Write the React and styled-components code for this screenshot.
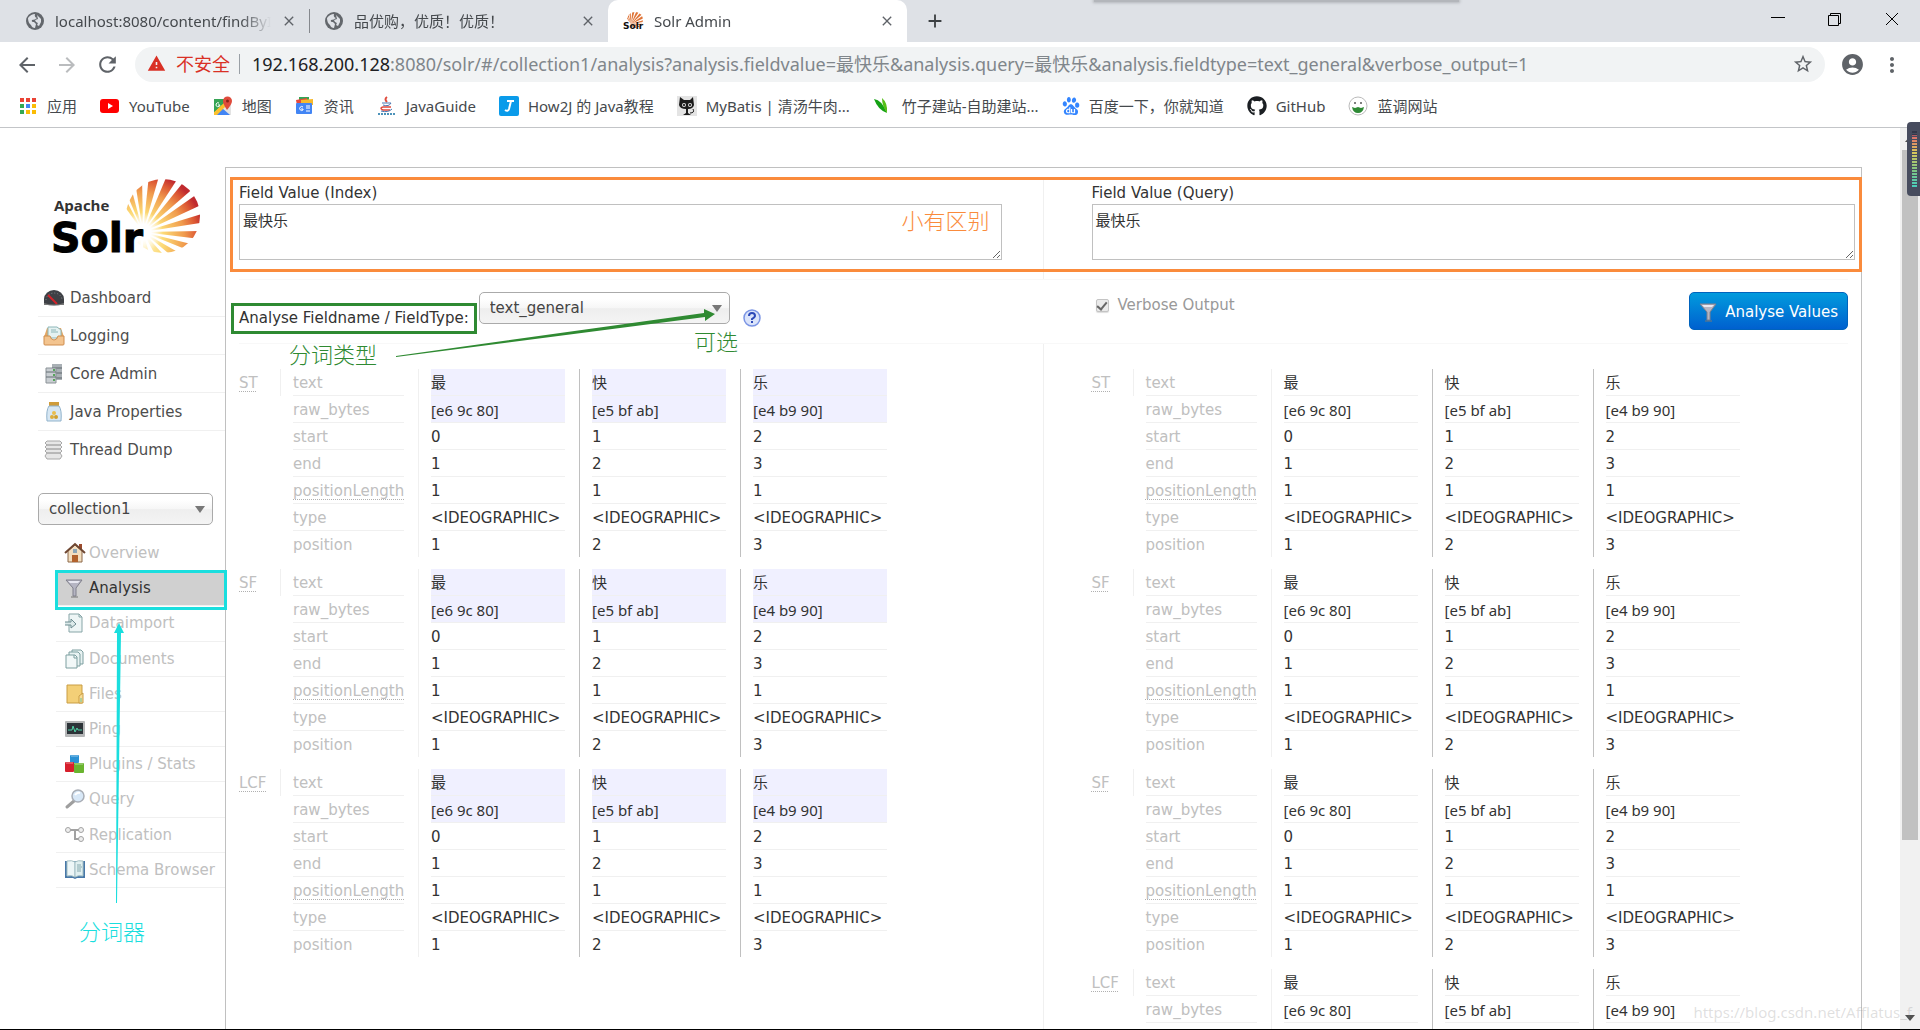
import { FaGithub } from "react-icons/fa";
import {
  MdAccountCircle,
  MdAdd,
  MdArrowBack,
  MdArrowForward,
  MdClose,
  MdMoreVert,
  MdRefresh,
  MdStarBorder,
  MdWarning,
} from "react-icons/md";
import { SiBaidu } from "react-icons/si";
import styled, { createGlobalStyle } from "styled-components";

const GlobalStyle = createGlobalStyle`
  * {
    box-sizing: border-box;
  }

  body {
    margin: 0;
    background: #fff;
    color: #333;
    font-family: "DejaVu Sans", "Noto Sans CJK SC", sans-serif;
    font-size: 15px;
    line-height: 20px;
  }

  ul {
    margin: 0;
    padding: 0;
    list-style: none;
  }

  button {
    padding: 0;
    border: 0;
    background: none;
    color: inherit;
    font: inherit;
  }

  a {
    color: inherit;
    text-decoration: none;
  }

  svg {
    display: block;
    flex: none;
    overflow: visible;
  }
`;

const ORANGE = "#fa8b3c";
const GREEN = "#2f8a32";
const CYAN = "#1adede";

/* ---------- browser window ---------- */

const Window = styled.div`
  position: relative;
  display: flex;
  flex-direction: column;
  height: 100vh;
  overflow: hidden;
  border-bottom: 1px solid #000;
`;

const Chrome = styled.header`
  flex: none;
  font-family: "Noto Sans", "Noto Sans CJK SC", sans-serif;
  border-bottom: 1px solid #c3c5c8;
`;

const TabStrip = styled.div`
  position: relative;
  display: flex;
  align-items: stretch;
  height: 42px;
  padding-left: 10px;
  background: #dee1e6;
`;

const TopShadow = styled.div`
  position: absolute;
  top: 0;
  left: 57%;
  width: 19%;
  height: 2px;
  background: #b3b6bb;
  box-shadow: 0 0 3px 1px #b3b6bb;
`;

const Tab = styled.div`
  display: flex;
  align-items: center;
  gap: 10px;
  width: 299px;
  padding: 0 12px 0 15px;
  background: ${(p) => (p.$active ? "#fff" : "transparent")};
  border-radius: 10px 10px 0 0;
  color: #45494d;
`;

const TabTitle = styled.span`
  flex: 1;
  min-width: 0;
  overflow: hidden;
  line-height: 28px;
  white-space: nowrap;
  mask-image: linear-gradient(90deg, #000 86%, transparent);
`;

const TabDivider = styled.span`
  align-self: center;
  width: 1px;
  height: 24px;
  margin-right: -1px;
  background: #85888d;
`;

const IconButton = styled.button`
  display: flex;
  align-items: center;
  justify-content: center;
  width: ${(p) => p.$width || 16}px;
  color: ${(p) => p.$color || "#5f6368"};
`;

const WindowButtons = styled.div`
  display: flex;
  margin-left: auto;
`;

const Toolbar = styled.div`
  display: flex;
  align-items: center;
  height: 45px;
  padding: 0 8px 0 7px;
`;

const AddressBar = styled.div`
  display: flex;
  flex: 1;
  align-items: center;
  height: 35px;
  margin: 0 7px;
  padding: 0 14px 2px 12px;
  border-radius: 18px;
  background: #f1f3f4;
  color: #80868b;
  font-size: 18px;
`;

const Insecure = styled.span`
  display: flex;
  align-items: center;
  gap: 10px;
  padding-right: 9px;
  border-right: 1px solid #9aa0a6;
  color: #d93025;
`;

const Url = styled.div`
  flex: 1;
  padding-left: 12px;
  overflow: hidden;
  line-height: 32px;
  white-space: nowrap;

  b {
    color: #202124;
    font-weight: 400;
  }
`;

const Bookmarks = styled.nav`
  display: flex;
  align-items: center;
  gap: 23px;
  height: 40px;
  padding: 0 18px 2px;
  color: #45494d;
`;

const Bookmark = styled.a`
  display: flex;
  align-items: center;
  gap: 9px;
  white-space: nowrap;
`;

const Viewport = styled.div`
  display: flex;
  flex: 1;
  min-height: 0;
`;

const Scrollbar = styled.div`
  display: flex;
  flex: none;
  flex-direction: column;
  align-items: center;
  justify-content: space-between;
  width: 20px;
  padding: 8px 3px 8px 1px;
  border-left: 1px solid #f1f1f1;
  background: #f1f1f1;
`;

const Thumb = styled.div`
  width: 16px;
  height: 78%;
  margin-bottom: auto;
  margin-top: 8px;
  background: #c1c1c1;
`;

const Meter = styled.div`
  position: absolute;
  top: 122px;
  right: 0;
  width: 13px;
  height: 74px;
  padding: 8px 3px 8px 5px;
  border-radius: 4px 0 0 4px;
  background: #474c5e;
`;

const MeterScale = styled.div`
  height: 100%;
  background:
    repeating-linear-gradient(#474c5e 0 1px, transparent 1px 3px),
    linear-gradient(#33384a 0 8%, #e0696c 10%, #d9c65a 38%, #7dc584 70%, #45cfc0);
`;

const Watermark = styled.div`
  position: absolute;
  right: 8px;
  bottom: 7px;
  color: rgba(130, 130, 130, 0.25);
  font-family: "Noto Sans", sans-serif;
  font-size: 15px;
`;

/* ---------- page ---------- */

const Page = styled.div`
  display: flex;
  flex: 1;
  min-width: 0;
  padding: 39px 38px 0;
  overflow: hidden;
`;

const Sidebar = styled.aside`
  flex: none;
  width: 187px;
`;

const LogoLink = styled.a`
  display: block;
  margin: 11px 0 25px 15px;
`;

const MainMenu = styled.ul`
  li + li {
    border-top: 1px solid #f0f0f0;
  }
`;

const MenuLink = styled.a`
  display: flex;
  align-items: center;
  gap: 6px;
  height: 37px;
  padding-left: 6px;
  color: #4d4d4d;
`;

const SelectBox = styled.div`
  position: relative;
  width: ${(p) => p.$width}px;
  height: 32px;

  svg {
    position: absolute;
    top: 13px;
    right: 8px;
    pointer-events: none;
  }
`;

const Select = styled.select`
  appearance: none;
  width: 100%;
  height: 100%;
  padding: 0 24px 0 10px;
  border: 1px solid #aaa;
  border-radius: 5px;
  background: linear-gradient(#fff 20%, #f6f6f6 50%, #eee 52%, #f4f4f4);
  color: #444;
  font: inherit;
`;

const CoreArea = styled.div`
  margin-top: 25px;
`;

const CoreMenu = styled.ul`
  position: relative;
  display: grid;
  grid-template-rows: repeat(10, 1fr);
  height: 352px;
  margin: 11px 0 0 18px;

  li {
    display: flex;
    border-bottom: 1px solid #f0f0f0;
  }

  li:first-child,
  li:last-child {
    border-bottom-color: transparent;
  }
`;

const CoreLink = styled.a`
  display: flex;
  flex: 1;
  align-items: center;
  gap: 4px;
  padding-left: 9px;
  background: ${(p) => (p.$active ? "#d0d0d0" : "transparent")};
  color: ${(p) => (p.$active ? "#333" : "#c0c0c0")};
  white-space: nowrap;
`;

const Content = styled.main`
  flex: 1;
  min-width: 0;
  padding-top: 10px;
  border: 1px solid #c0c0c0;
  border-bottom: 0;
`;

const Halves = styled.div`
  position: relative;
  display: grid;
  grid-template-columns: 1fr 1fr;
`;

const Half = styled.div`
  padding: ${(p) => (p.$right ? "0 6px 0 48px" : "0 41px 0 13px")};
  border-right: ${(p) => (p.$right ? "0" : "1px solid #f0f0f0")};
`;

const FieldHalf = styled(Half)`
  padding-top: 5px;
  padding-bottom: 19px;
`;

const FieldBox = styled.div`
  position: relative;
  margin-top: 1px;
`;

const TextArea = styled.textarea`
  display: block;
  width: 100%;
  height: 56px;
  padding: 6px 3px;
  border: 1px solid #c0c0c0;
  color: #333;
  font: inherit;
`;

const Options = styled.div`
  display: grid;
  grid-template-columns: 1fr 1fr;
  height: 65px;
  margin: 0 13px;
  padding-top: 12px;
  border-top: 1px solid #f8f8f8;
  border-bottom: 1px solid #f8f8f8;
`;

const TypePicker = styled.div`
  position: relative;
  display: flex;
  align-items: flex-start;
`;

const TypeLabel = styled.label`
  position: relative;
  margin: 11px 10px 0 0;
  line-height: 31px;
  white-space: nowrap;
`;

const HelpButton = styled.button`
  margin: 17px 0 0 13px;
`;

const Submit = styled.div`
  display: flex;
  align-items: flex-start;
  justify-content: space-between;
  padding-left: 52px;
`;

const VerboseLabel = styled.label`
  display: flex;
  align-items: center;
  gap: 9px;
  padding-top: 3px;
  color: #999;
`;

const CheckBox = styled.input`
  appearance: none;
  width: 13px;
  height: 13px;
  margin: 0;
  border: 1px solid #c4c4c4;
  border-radius: 2px;
  background: #eaeaea;
  box-shadow: 0 1px 1px #ddd;

  &:checked::before {
    content: "";
    display: block;
    width: 4px;
    height: 8px;
    margin: 0 auto;
    border: solid #666;
    border-width: 0 2px 2px 0;
    transform: rotate(40deg);
  }
`;

const AnalyseButton = styled.button`
  display: flex;
  align-items: center;
  gap: 6px;
  height: 38px;
  padding: 1px 9px 0;
  border: 1px solid #0063bd;
  border-radius: 5px;
  background: linear-gradient(#019bdd, #0060cf);
  color: #fff;
  white-space: nowrap;
`;

const ResultHalf = styled(Half)`
  padding-top: 25px;
`;

const StageTable = styled.table`
  width: 662px;
  margin-bottom: 12px;
  border-spacing: 0;
  table-layout: fixed;
`;

const StageCell = styled.th`
  width: 41px;
  padding: 0;
  color: #c0c0c0;
  font-weight: 400;
  text-align: left;
`;

const LabelCell = styled.th`
  width: 138px;
  padding: 0 14px 0 12px;
  border-left: 1px solid ${(p) => (p.$first ? "#f0f0f0" : "transparent")};
  color: #c0c0c0;
  font-weight: 400;
  text-align: left;
`;

const TokenCell = styled.td`
  width: 161px;
  padding: 0 14px 0 12px;
  border-left: 1px solid ${(p) => (p.$first ? "#f0f0f0" : "#c0c0c0")};
`;

const Value = styled.div`
  height: ${(p) => (p.$last ? 26 : 27)}px;
  padding-top: 4px;
  border-bottom: ${(p) => (p.$last ? "0" : "1px solid #f0f0f0")};
  background: ${(p) => (p.$match ? "#f0f0ff" : "transparent")};
  font-family: ${(p) => (p.$bytes ? '"Noto Sans", sans-serif' : "inherit")};
  white-space: nowrap;
`;

const Abbr = styled.abbr`
  text-decoration: underline dotted #b0b0b0 1px;
  text-underline-offset: 3px;
  text-decoration-skip-ink: none;
`;

/* ---------- hand drawn notes ---------- */

const Frame = styled.div`
  position: absolute;
  inset: ${(p) => p.$inset};
  border: 3px solid ${(p) => p.$color};
  pointer-events: none;
`;

const Note = styled.span`
  position: absolute;
  top: ${(p) => p.$top}px;
  left: ${(p) => p.$left};
  right: ${(p) => p.$right};
  color: ${(p) => p.$color};
  font-family: "Noto Sans CJK SC", sans-serif;
  font-size: 22px;
  font-weight: 300;
  line-height: 28px;
  white-space: nowrap;
  pointer-events: none;
`;

const Arrow = styled.svg`
  position: absolute;
  top: ${(p) => p.$top}px;
  left: ${(p) => p.$left}px;
  pointer-events: none;
`;

/* ---------- drawings ---------- */

const RAYS = [
  [-122, 4], [-109, 4], [-95, 4], [-79, 5], [-62, 5], [-46, 5], [-30, 5],
  [-13, 4], [3, 4], [18, 4], [35, 5], [55, 7], [82, 8], [110, 8],
];

function Sun({ x, y, far }) {
  const point = (deg) => {
    const rad = (deg * Math.PI) / 180;
    return `${x + Math.cos(rad) * far},${y + Math.sin(rad) * far}`;
  };

  return RAYS.map(([deg, half]) => (
    <polygon key={deg} points={`${x},${y} ${point(deg - half)} ${point(deg + half)}`} />
  ));
}

function SolrLogo() {
  return (
    <svg width="150" height="76" viewBox="0 0 150 76" role="img" aria-label="Apache Solr">
      <defs>
        <radialGradient id="sun" gradientUnits="userSpaceOnUse" cx="84" cy="61" r="68">
          <stop offset="0.1" stopColor="#fff6cf" />
          <stop offset="0.4" stopColor="#fcd974" />
          <stop offset="0.7" stopColor="#f09b4d" />
          <stop offset="0.88" stopColor="#dd5a34" />
          <stop offset="1" stopColor="#c02a2e" />
        </radialGradient>
        <radialGradient id="core" gradientUnits="userSpaceOnUse" cx="90" cy="54" r="20">
          <stop offset="0.4" stopColor="#fff" />
          <stop offset="1" stopColor="#fff" stopOpacity="0" />
        </radialGradient>
        <clipPath id="disc">
          <circle cx="110" cy="38" r="37" />
        </clipPath>
      </defs>
      <g clipPath="url(#disc)" fill="url(#sun)">
        <Sun x={90} y={54} far={90} />
      </g>
      <circle cx="90" cy="54" r="20" fill="url(#core)" />
      <text x="1" y="33" fontSize="15" fontWeight="700" fontFamily="Open Sans, sans-serif" fill="#333">
        Apache
      </text>
      <text x="-2" y="74" fontSize="41" fontWeight="700" fontFamily="DejaVu Sans, sans-serif" fill="#000" stroke="#000">
        Solr
      </text>
    </svg>
  );
}

const DRAWINGS = {
  globe: (
    <>
      <circle cx="10" cy="10" r="9" fill="#63676c" />
      <path d="M3 7Q6 3 10 3Q9 6 12 7Q10 9 7 9Q6 11 9 11L11 13L10 17Q7 17 6 14Q3 12 3 7Z" fill="#dee1e6" />
      <path d="M12 4L16 8V11L14 15L12 14Q14 12 11 11L10 9L13 8Z" fill="#dee1e6" />
    </>
  ),
  dashboard: (
    <>
      <path d="M0 16V11A10 9 0 0 1 20 11V16Q10 19 0 16Z" fill="#3e4045" />
      <path d="M2 12A8 7 0 0 1 18 12" fill="none" stroke="#85888c" strokeDasharray="1 2" />
      <path d="M4 7L13 16" stroke="#d2232a" strokeWidth="2" />
      <path d="M0 15Q10 18 20 15V17H0Z" fill="#777" />
    </>
  ),
  logging: (
    <>
      <path d="M3 2H17L20 11H0Z" fill="#e3a765" />
      <path d="M4 1H13L17 4V12H4Z" fill="#e5f2f2" stroke="#8db6b8" />
      <path d="M7 4H12M7 6H14" stroke="#8db6b8" />
      <path d="M0 10H6Q7 14 10 14T14 10H20V18Q20 19 19 19H1Q0 19 0 18Z" fill="#f3c48f" stroke="#cf8d4d" />
    </>
  ),
  core: (
    <>
      <path d="M8 0H18V16H8Z" fill="#a9b0b5" />
      <path d="M8 4H18M8 9H18M8 14H18" stroke="#5e676d" />
      <path d="M2 4H12V19H2Z" fill="#c9ced2" stroke="#8b9297" />
      <path d="M2 8H12M2 13H12" stroke="#656e74" />
      <path d="M9 6h2M9 11h2M9 16h2" stroke="#55a55b" strokeWidth="2" />
    </>
  ),
  java: (
    <>
      <path d="M5 0H15V4H5Z" fill="#cf9c3a" />
      <path d="M5 4H15Q18 8 17 19H3Q2 8 5 4Z" fill="#d7e7f3" stroke="#91b3cc" />
      <circle cx="10" cy="11" r="2" fill="#e9bd4c" />
      <circle cx="8" cy="15" r="2" fill="#ddae3c" />
      <circle cx="12" cy="15" r="2" fill="#d19f2e" />
    </>
  ),
  thread: (
    <path
      d="M3 1H16L18 3L16 5H3L1 3ZM3 5H16L18 7L16 9H3L1 7ZM3 9H16L18 11L16 13H3L1 11ZM3 13H16L18 16L16 19H3L1 16Z"
      fill="#e6e6e6"
      stroke="#a8a8a8"
    />
  ),
  house: (
    <>
      <path d="M14 1H17V6H14Z" fill="#9b4a2c" />
      <path d="M3 8L10 2L17 8V19H3Z" fill="#f3dfc1" stroke="#8c6848" />
      <path d="M0 10L10 1L20 10" fill="none" stroke="#6f4732" strokeWidth="2" />
      <path d="M7 12H13V19H7Z" fill="#b2622d" />
      <path d="M8 6H12V10H8Z" fill="#8da7b8" />
    </>
  ),
  funnel: (
    <>
      <path d="M1 2H17L11 10V18H8V10Z" fill="#b5b5c3" stroke="#80808c" />
      <path d="M3 3H15L13 5H5Z" fill="#e8e8f2" />
      <path d="M6 19H13" stroke="#777" />
    </>
  ),
  import: (
    <>
      <path d="M4 1H14L17 4V19H4Z" fill="#edf5f5" stroke="#87a5a7" />
      <path d="M14 1V4H17" fill="none" stroke="#87a5a7" />
      <path d="M0 9H6V6L11 11L6 15V12H0" fill="#dceaea" stroke="#6d8c90" />
    </>
  ),
  documents: (
    <>
      <path d="M7 1H16L18 3V15H7Z" fill="#e8f2f2" stroke="#7d9fa0" />
      <path d="M4 3H13L15 5V17H4Z" fill="#e8f2f2" stroke="#7d9fa0" />
      <path d="M1 6H10L12 8V19H1Z" fill="#f2f8f8" stroke="#7d9fa0" />
      <path d="M9 6V9H12" fill="none" stroke="#7d9fa0" />
    </>
  ),
  folder: (
    <>
      <path d="M2 1H17V19H2Z" fill="#f3cf77" stroke="#c99d45" />
      <path d="M14 19V12L18 9V19Z" fill="#f8dd98" stroke="#c99d45" />
      <path d="M16 14V18" stroke="#6abf9a" />
    </>
  ),
  ping: (
    <>
      <rect y="2" width="20" height="16" rx="1" fill="#b5b7b8" />
      <rect x="2" y="4" width="16" height="11" fill="#2c3338" />
      <path d="M3 11H7L8 7L10 13L12 9L13 11H17" fill="none" stroke="#4fd0a5" />
    </>
  ),
  plugins: (
    <>
      <rect x="5" y="1" width="9" height="8" rx="1" fill="#2a91d4" />
      <rect x="0" y="8" width="9" height="10" rx="1" fill="#d71f2c" />
      <rect x="9" y="9" width="10" height="10" rx="1" fill="#6ab42f" />
      <path d="M6 2H13M1 9H8M10 10H18" stroke="#fff" strokeOpacity="0.5" />
    </>
  ),
  magnifier: (
    <>
      <path d="M9 12L2 18" stroke="#9e9e9e" strokeWidth="3" strokeLinecap="round" />
      <circle cx="13" cy="7" r="6" fill="#d8e8f7" stroke="#a9aeb6" strokeWidth="1.500" />
      <path d="M10 6Q12 3 15 4" fill="none" stroke="#fff" strokeWidth="2" />
    </>
  ),
  nodes: (
    <g fill="#eee" stroke="#a2a2a2">
      <path d="M5 5H14M10 5V14H14" fill="none" strokeWidth="2" />
      <circle cx="3" cy="5" r="2.5" />
      <circle cx="16" cy="5" r="2.5" />
      <circle cx="16" cy="14" r="2.5" />
    </g>
  ),
  book: (
    <>
      <path d="M0 1H20V18H12L10 19L8 18H0Z" fill="#4878a8" />
      <path d="M2 1Q7 0 10 2V17Q7 15 2 16Z" fill="#edf6f7" stroke="#a3bfc4" />
      <path d="M18 1Q13 0 10 2V17Q13 15 18 16Z" fill="#e0eff0" stroke="#a3bfc4" />
      <path d="M12 5H16M12 7H17M12 9H16M12 11H16" stroke="#85a9ae" />
    </>
  ),
  apps: (
    <g>
      {["#ea4335", "#ea4335", "#ea4335", "#34a853", "#4285f4", "#fbbc05", "#34a853", "#fbbc05", "#fbbc05"].map(
        (fill, i) => (
          <rect key={i} x={2 + (i % 3) * 6} y={2 + Math.floor(i / 3) * 6} width="4" height="4" fill={fill} />
        ),
      )}
    </g>
  ),
  youtube: (
    <>
      <rect x="0" y="3" width="19" height="14" rx="3" fill="#f00" />
      <path d="M8 7L13 10L8 13Z" fill="#fff" />
    </>
  ),
  maps: (
    <>
      <path d="M1 3H15L18 8V19H1Z" fill="#e3e3e3" />
      <path d="M1 3H13V8L2 19H1Z" fill="#36a455" />
      <path d="M2 19L9 12L17 19Z" fill="#4285f4" />
      <path d="M1 16L11 6L14 9L4 19H1Z" fill="#fbc02d" />
      <path d="M1 3H11V7L1 16Z" fill="#36a455" />
      <path d="M6 7A2 2 0 1 0 7 9H5" fill="none" stroke="#fff" />
      <path d="M14 14Q10 8 10 5A4 4 0 0 1 19 5Q19 8 14 14Z" fill="#df4b3c" />
      <circle cx="14.500" cy="5" r="1.500" fill="#8b2318" />
    </>
  ),
  news: (
    <>
      <path d="M4 1H14V8H4Z" fill="#36a455" />
      <path d="M1 4L12 2V9H2Z" fill="#e8483a" />
      <path d="M6 4L18 3V9H6Z" fill="#f6b92c" />
      <rect x="1" y="7" width="16" height="11" rx="1" fill="#4285f4" />
      <path d="M8 11A2 2 0 1 0 8 14V13H6M11 10H15M11 12H15M11 15H15" fill="none" stroke="#fff" />
    </>
  ),
  javaguide: (
    <>
      <path d="M10 1Q7 3 10 6" fill="none" stroke="#df4a3c" strokeWidth="2" />
      <path d="M5 7H14Q12 11 6 9" fill="none" stroke="#4a76b1" />
      <path d="M14 11H6Q2 12 6 14H13" fill="none" stroke="#df4a3c" strokeWidth="1.500" />
      <path d="M4 15Q11 17 15 13" fill="none" stroke="#4a76b1" />
      <path d="M1 18H18" stroke="#4d93ba" strokeWidth="2" strokeDasharray="2 1" />
    </>
  ),
  how2j: (
    <>
      <rect width="20" height="20" rx="2" fill="#0a9bea" />
      <path d="M8 5H15M12 5L10 13Q9 16 6 14" fill="none" stroke="#fff" strokeWidth="2" />
    </>
  ),
  cat: (
    <>
      <rect width="20" height="20" fill="#e4e4e4" />
      <path d="M3 1L7 4H13L16 1L17 9Q16 13 11 13V17L14 19H6L9 17V13Q3 13 2 9Z" fill="#1b1b1b" />
      <path d="M13 17Q18 17 16 13" fill="none" stroke="#1b1b1b" />
      <circle cx="7" cy="9" r="2" fill="#ddd" />
      <circle cx="13" cy="9" r="2" fill="#ddd" />
      <circle cx="7" cy="9" r="1" />
      <circle cx="13" cy="9" r="1" />
    </>
  ),
  bamboo: (
    <>
      <path d="M1 3Q9 4 14 17Q5 14 1 3Z" fill="#14a114" />
      <path d="M9 2Q15 7 14 17Q9 10 9 2Z" fill="#55bf16" />
    </>
  ),
  face: (
    <>
      <circle cx="10" cy="10" r="9" fill="#fff" stroke="#bbb" />
      <circle cx="7" cy="7" r="1" fill="#555" />
      <circle cx="13" cy="7" r="1" fill="#555" />
      <path d="M4 11L7 12L10 11L13 12L16 11Q15 17 10 17T4 11Z" fill="#2e8a35" />
    </>
  ),
};

function Drawing({ name }) {
  return (
    <svg width="20" height="20" viewBox="0 0 20 20" aria-hidden="true">
      {DRAWINGS[name]}
    </svg>
  );
}

function SolrFavicon() {
  return (
    <svg width="21" height="20" viewBox="0 0 21 20" aria-hidden="true">
      <clipPath id="faviconDisc">
        <circle cx="12" cy="9" r="8" />
      </clipPath>
      <g clipPath="url(#faviconDisc)" fill="#df7437">
        <Sun x={8} y={13} far={20} />
      </g>
      <text x="0" y="18" fontSize="9" fontWeight="700" fontFamily="DejaVu Sans, sans-serif" fill="#111">
        Solr
      </text>
    </svg>
  );
}

/* ---------- data ---------- */

const mainMenu = [
  ["dashboard", "Dashboard"],
  ["logging", "Logging"],
  ["core", "Core Admin"],
  ["java", "Java Properties"],
  ["thread", "Thread Dump"],
];

const coreMenu = [
  ["house", "Overview"],
  ["funnel", "Analysis"],
  ["import", "Dataimport"],
  ["documents", "Documents"],
  ["folder", "Files"],
  ["ping", "Ping"],
  ["plugins", "Plugins / Stats"],
  ["magnifier", "Query"],
  ["nodes", "Replication"],
  ["book", "Schema Browser"],
];

const bookmarks = [
  [<Drawing name="apps" />, "应用"],
  [<Drawing name="youtube" />, "YouTube"],
  [<Drawing name="maps" />, "地图"],
  [<Drawing name="news" />, "资讯"],
  [<Drawing name="javaguide" />, "JavaGuide"],
  [<Drawing name="how2j" />, "How2J 的 Java教程"],
  [<Drawing name="cat" />, "MyBatis | 清汤牛肉..."],
  [<Drawing name="bamboo" />, "竹子建站-自助建站..."],
  [<SiBaidu size={18} color="#3385ff" />, "百度一下，你就知道"],
  [<FaGithub size={20} color="#1b1f23" />, "GitHub"],
  [<Drawing name="face" />, "蓝调网站"],
];

const rows = [
  ["text", "最", "快", "乐"],
  ["raw_bytes", "[e6 9c 80]", "[e5 bf ab]", "[e4 b9 90]"],
  ["start", "0", "1", "2"],
  ["end", "1", "2", "3"],
  ["positionLength", "1", "1", "1"],
  ["type", "<IDEOGRAPHIC>", "<IDEOGRAPHIC>", "<IDEOGRAPHIC>"],
  ["position", "1", "2", "3"],
];

/* ---------- components ---------- */

function DropDown({ id, label, width, value }) {
  return (
    <SelectBox $width={width}>
      <Select id={id} aria-label={label} defaultValue={value}>
        <option>{value}</option>
      </Select>
      <svg width="10" height="7" viewBox="0 0 10 7">
        <path d="M0 0H10L5 7Z" fill="#777" />
      </svg>
    </SelectBox>
  );
}

function Stage({ name, match }) {
  return (
    <StageTable>
      <tbody>
        {rows.map(([label, ...values], i) => {
          const last = i === rows.length - 1;
          return (
            <tr key={label}>
              <StageCell>{i === 0 && <Abbr>{name}</Abbr>}</StageCell>
              <LabelCell scope="row" $first={i === 0}>
                <Value $last={last}>
                  {label === "positionLength" ? <Abbr>{label}</Abbr> : label}
                </Value>
              </LabelCell>
              {values.map((value, n) => (
                <TokenCell key={n} $first={n === 0}>
                  <Value $last={last} $match={match && i < 2} $bytes={label === "raw_bytes"}>
                    {value}
                  </Value>
                </TokenCell>
              ))}
            </tr>
          );
        })}
      </tbody>
    </StageTable>
  );
}

function BrowserChrome() {
  return (
    <Chrome>
      <TabStrip role="tablist">
        <TopShadow />
        <Tab role="tab">
          <Drawing name="globe" />
          <TabTitle>localhost:8080/content/findByI</TabTitle>
          <IconButton aria-label="Close tab"><MdClose size={16} /></IconButton>
        </Tab>
        <TabDivider />
        <Tab role="tab">
          <Drawing name="globe" />
          <TabTitle>品优购，优质！优质！</TabTitle>
          <IconButton aria-label="Close tab"><MdClose size={16} /></IconButton>
        </Tab>
        <Tab role="tab" aria-selected="true" $active>
          <SolrFavicon />
          <TabTitle>Solr Admin</TabTitle>
          <IconButton aria-label="Close tab"><MdClose size={16} /></IconButton>
        </Tab>
        <IconButton aria-label="New tab" $width={56} $color="#3c4043"><MdAdd size={22} /></IconButton>
        <WindowButtons>
          <IconButton aria-label="Minimize" $width={57}>
            <svg width="14" height="14" viewBox="0 0 14 14"><path d="M0 3.500H14" stroke="#000" /></svg>
          </IconButton>
          <IconButton aria-label="Restore" $width={57}>
            <svg width="14" height="20" viewBox="0 0 14 20">
              <path d="M.5 4.500H10.500V14.500H.5ZM2.500 4V2.500H12.500V12.500H11" fill="none" stroke="#000" />
            </svg>
          </IconButton>
          <IconButton aria-label="Close" $width={57}>
            <svg width="14" height="20" viewBox="0 0 14 20"><path d="M1 2L13 14M13 2L1 14" stroke="#000" /></svg>
          </IconButton>
        </WindowButtons>
      </TabStrip>
      <Toolbar>
        <IconButton aria-label="Back" $width={40}><MdArrowBack size={24} /></IconButton>
        <IconButton aria-label="Forward" $width={40} $color="#babcbe"><MdArrowForward size={24} /></IconButton>
        <IconButton aria-label="Reload" $width={41}><MdRefresh size={25} /></IconButton>
        <AddressBar>
          <Insecure><MdWarning size={19} />不安全</Insecure>
          <Url role="textbox" aria-label="Address">
            <b>192.168.200.128</b>
            :8080/solr/#/collection1/analysis?analysis.fieldvalue=最快乐&analysis.query=最快乐&analysis.fieldtype=text_general&verbose_output=1
          </Url>
          <IconButton aria-label="Bookmark"><MdStarBorder size={22} /></IconButton>
        </AddressBar>
        <IconButton aria-label="Profile" $width={40}><MdAccountCircle size={25} /></IconButton>
        <IconButton aria-label="Menu" $width={40}><MdMoreVert size={24} /></IconButton>
      </Toolbar>
      <Bookmarks>
        {bookmarks.map(([icon, title]) => (
          <Bookmark href="#" key={title}>
            {icon}
            {title}
          </Bookmark>
        ))}
      </Bookmarks>
    </Chrome>
  );
}

function SolrSidebar() {
  return (
    <Sidebar>
      <LogoLink href="#"><SolrLogo /></LogoLink>
      <MainMenu>
        {mainMenu.map(([icon, title]) => (
          <li key={title}>
            <MenuLink href="#"><Drawing name={icon} />{title}</MenuLink>
          </li>
        ))}
      </MainMenu>
      <CoreArea>
        <DropDown id="core" label="Core" width={175} value="collection1" />
        <CoreMenu>
          {coreMenu.map(([icon, title]) => (
            <li key={title}>
              <CoreLink href="#" $active={title === "Analysis"}>
                <Drawing name={icon} />
                {title}
              </CoreLink>
            </li>
          ))}
          <Frame $color={CYAN} $inset="34px -2px 278px -1px" />
          <Arrow $top={87} $left={53} width="20" height="282" viewBox="0 0 20 282">
            <path d="M10 0L15 10H12L8 280H7L8 10H5Z" fill={CYAN} />
          </Arrow>
          <Note $color={CYAN} $top={380} $left="23px">分词器</Note>
        </CoreMenu>
      </CoreArea>
    </Sidebar>
  );
}

function Analysis() {
  return (
    <Content>
      <Halves>
        <FieldHalf>
          <label htmlFor="index-value">Field Value (Index)</label>
          <FieldBox>
            <TextArea id="index-value" defaultValue="最快乐" />
            <Note $color={ORANGE} $top={1} $right="12px">小有区别</Note>
          </FieldBox>
        </FieldHalf>
        <FieldHalf $right>
          <label htmlFor="query-value">Field Value (Query)</label>
          <FieldBox>
            <TextArea id="query-value" defaultValue="最快乐" />
          </FieldBox>
        </FieldHalf>
        <Frame $color={ORANGE} $inset="-1px -1px 7px 4px" />
      </Halves>
      <Options>
        <TypePicker>
          <TypeLabel htmlFor="field-type">
            Analyse Fieldname / FieldType:
            <Frame $color={GREEN} $inset="0 -8px 0 -8px" />
          </TypeLabel>
          <DropDown id="field-type" width={251} value="text_general" />
          <HelpButton aria-label="Help">
            <svg width="18" height="18" viewBox="0 0 18 18">
              <circle cx="9" cy="9" r="8" fill="#dbe4fa" stroke="#7a94e4" strokeWidth="1.500" />
              <path d="M6 7Q6 4 9 4T12 7Q12 8 9 10V11M9 12V14" fill="none" stroke="#2c49b8" strokeWidth="2" />
            </svg>
          </HelpButton>
          <Note $color={GREEN} $top={47} $left="50px">分词类型</Note>
          <Note $color={GREEN} $top={34} $left="455px">可选</Note>
          <Arrow $top={14} $left={157} width="320" height="52" viewBox="0 0 320 52">
            <path d="M0 50L308 7V3L319 8L309 15V11L0 51Z" fill={GREEN} />
          </Arrow>
        </TypePicker>
        <Submit>
          <VerboseLabel>
            <CheckBox type="checkbox" defaultChecked />
            Verbose Output
          </VerboseLabel>
          <AnalyseButton type="submit">
            <Drawing name="funnel" />
            Analyse Values
          </AnalyseButton>
        </Submit>
      </Options>
      <Halves>
        <ResultHalf>
          {["ST", "SF", "LCF"].map((name) => (
            <Stage key={name} name={name} match />
          ))}
        </ResultHalf>
        <ResultHalf $right>
          {["ST", "SF", "SF", "LCF"].map((name, i) => (
            <Stage key={i} name={name} />
          ))}
        </ResultHalf>
      </Halves>
    </Content>
  );
}

function App() {
  return (
    <Window>
      <GlobalStyle />
      <BrowserChrome />
      <Viewport>
        <Page>
          <SolrSidebar />
          <Analysis />
        </Page>
        <Scrollbar>
          <svg width="10" height="6" viewBox="0 0 10 6"><path d="M0 6L5 0L10 6Z" fill="#505050" /></svg>
          <Thumb />
          <svg width="10" height="6" viewBox="0 0 10 6"><path d="M0 0L5 6L10 0Z" fill="#505050" /></svg>
        </Scrollbar>
      </Viewport>
      <Meter><MeterScale /></Meter>
      <Watermark>https://blog.csdn.net/Afflatus_f</Watermark>
    </Window>
  );
}

export default App;
